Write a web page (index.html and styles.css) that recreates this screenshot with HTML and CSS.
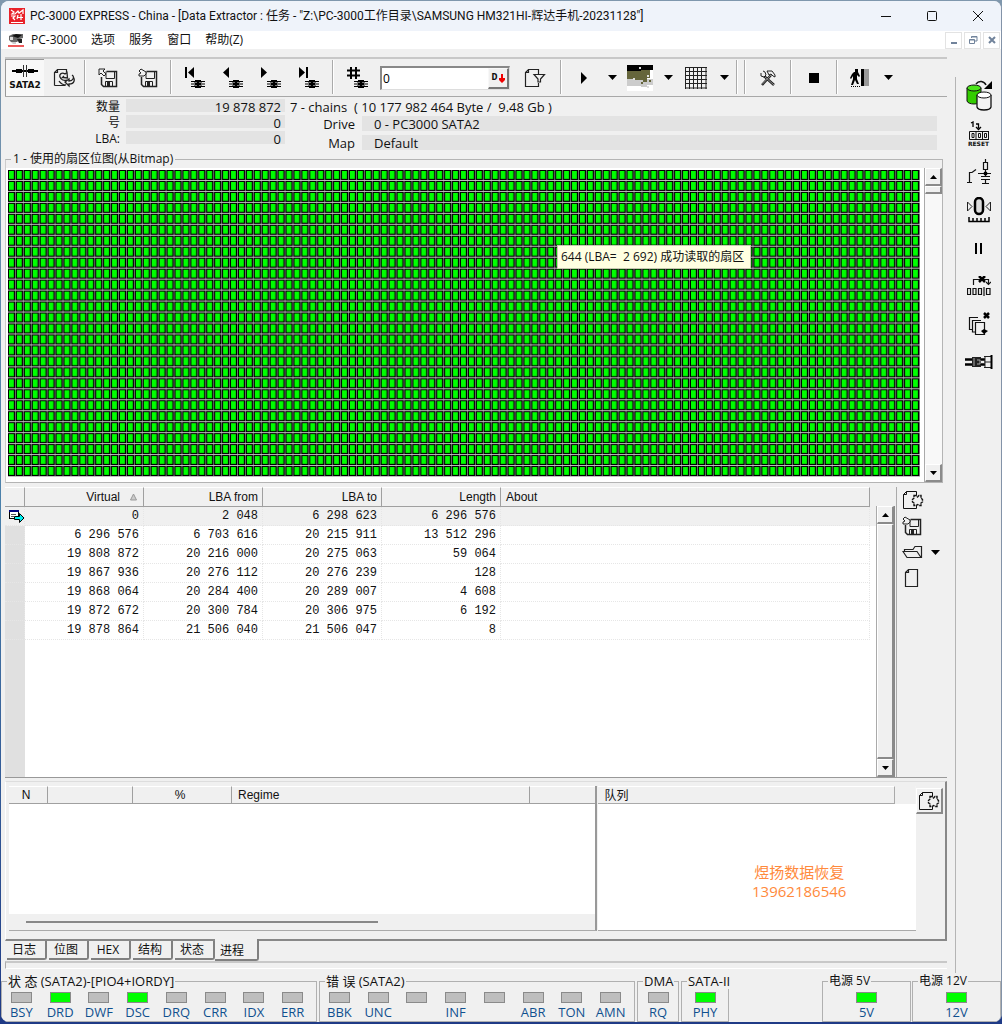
FILE: index.html
```html
<!DOCTYPE html>
<html lang="zh-CN">
<head>
<meta charset="utf-8">
<meta name="viewport" content="width=device-width, initial-scale=1">
<title>PC-3000 EXPRESS - China</title>
<link rel="stylesheet" href="styles.css">
</head>
<body>
<svg class="sprite" aria-hidden="true">
  <symbol id="i-gear-doc" viewBox="0 0 22 20">
    <path d="M4.500 1.500H14.500V5M1.500 4.500V18.500H14.500V15M1.500 4.500H4.500V1.500M1.500 4.500L4.500 1.500" fill="none" stroke="#111"/>
    <path d="M12 5.500H14L15.500 7L17 5.500H19V8L20.500 9.500V12L19 13V15.500H17L15.500 14.500L14 15.500H12V13L10.500 12V9.500L12 8Z" fill="#f0f0f0" stroke="#111" stroke-width="1.400" stroke-dasharray="3 .7"/>
  </symbol>
  <symbol id="i-save" viewBox="0 0 20 20">
    <path d="M8.500 3.500H18.500V18.500H5.500L3.500 16.500V9" fill="none" stroke="#222" stroke-width="1.500"/>
    <path d="M8 3.500V10.500H16.500V4M7.500 18V13.500H14.500V18M9.500 14V18" fill="none" stroke="#222"/>
    <rect x="9" y="14" width="3" height="4" fill="#222"/>
  </symbol>
  <symbol id="i-caret" viewBox="0 0 9 5"><path d="M0 0H9L4.500 5Z"/></symbol>
  <symbol id="i-chip" viewBox="0 0 14 8">
    <path d="M0 1.500H14M0 4H14M0 6.500H14" stroke="#000"/><rect x="4" y="0" width="6" height="8"/><path d="M3 2.500H6M8 2.500H11M3 5.500H6M8 5.500H11" stroke="#777"/>
  </symbol>
  <symbol id="i-up" viewBox="0 0 7 4"><path d="M0 4H7L3.500 0Z"/></symbol>
  <symbol id="i-down" viewBox="0 0 7 4"><path d="M0 0H7L3.500 4Z"/></symbol>
</svg>

<div class="window">
  <header class="titlebar">
    <svg class="app-icon" viewBox="0 0 16 16" aria-hidden="true"><rect width="16" height="16" fill="#e8222a"/><path d="M2 2L5 4L3 6H6L9 3L10 5L14 2V6M2 8H6L4 10L6 12M9 7L8 11M12 6V12M9 9.500H14M2 14.500H14" fill="none" stroke="#fff" stroke-width="1.200"/></svg>
    <h1 class="title">PC-3000 EXPRESS - China - [Data Extractor : 任务 - "Z:\PC-3000工作目录\SAMSUNG HM321HI-辉达手机-20231128"]</h1>
    <div class="win-controls">
      <button type="button" aria-label="最小化"><svg width="12" height="12" viewBox="0 0 12 12"><path d="M1 6.500H11" stroke="#111"/></svg></button>
      <button type="button" aria-label="最大化"><svg width="12" height="12" viewBox="0 0 12 12"><rect x="1.500" y="1.500" width="9" height="9" rx="1" fill="none" stroke="#111"/></svg></button>
      <button type="button" aria-label="关闭"><svg width="12" height="12" viewBox="0 0 12 12"><path d="M1 1L11 11M11 1L1 11" stroke="#111"/></svg></button>
    </div>
  </header>

  <nav class="menubar">
    <svg class="menu-icon" viewBox="0 0 16 14" aria-hidden="true"><path d="M1 3L5 1H15V5L12 6L9 9H3L1 7Z" fill="#666"/><path d="M4 3L8 1L14 2L10 5Z" fill="#111"/><path d="M2 4H5V7H2Z" fill="#ddd"/><path d="M9 6H14V10H11Z" fill="#222"/><path d="M3 9H8V11H5Z" fill="#ccc"/><rect y="12" width="16" height="2" fill="#ee5b5b"/></svg>
    <button type="button">PC-3000</button>
    <button type="button">选项</button>
    <button type="button">服务</button>
    <button type="button">窗口</button>
    <button type="button">帮助(Z)</button>
    <div class="mdi-controls">
      <button type="button" aria-label="最小化子窗口"><svg width="10" height="10" viewBox="0 0 10 10"><path d="M2 8H8" stroke="#71839b" stroke-width="2"/></svg></button>
      <button type="button" aria-label="还原子窗口"><svg width="10" height="10" viewBox="0 0 10 10"><path d="M3.500 3V1.500H9V6H7M3.500 2H9M1.500 4.500H6.500V8.500H1.500ZM1.500 5H6.500" fill="none" stroke="#71839b"/></svg></button>
      <button type="button" aria-label="关闭子窗口"><svg width="10" height="10" viewBox="0 0 10 10"><path d="M2 2L8 8M8 2L2 8" stroke="#71839b" stroke-width="2"/></svg></button>
    </div>
  </nav>

  <div class="workspace">
    <main class="main">
      <div class="toolbar">
        <button type="button" class="tool sata"><svg width="26" height="12" viewBox="0 0 26 12" aria-hidden="true"><path d="M0 6H26" stroke="#000" stroke-width="2"/><path d="M4 4.500H10M16 4.500H22M4 7.500H10M16 7.500H22" stroke="#000"/><path d="M11.500 0V12M14.500 0V12" stroke="#333"/></svg><span>SATA2</span></button>
        <button type="button" class="tool refresh" aria-label="刷新"><svg width="22" height="20" viewBox="0 0 22 20"><path d="M1.500 17.500V4.500L4.500 1.500H13.500V4M1.500 4.500H4.500V1.500M1.500 17.500H12" fill="none" stroke="#222" stroke-width="1.200"/><path d="M7 9C6 6 9 4 12 6L14 4.500L14.500 10L9.500 9.500L11 8M19 7C22 9 20 13 16 13V11L12 14L16 18V16C22 16 22 11 20 9M7 9C8 12 11 13 14 12M6 13C8 16 10 17 13 17" fill="none" stroke="#222" stroke-width="1.300"/></svg></button>
        <span class="sep"></span>
        <div class="group saves">
          <button type="button" class="tool" aria-label="保存"><svg width="20" height="20" viewBox="0 0 20 20"><use href="#i-save"/><path d="M1 1H7L5 3L8 6L6 8L3 5L1 7Z" fill="#f0f0f0" stroke="#222"/></svg></button>
          <button type="button" class="tool" aria-label="另存为"><svg width="20" height="20" viewBox="0 0 20 20"><use href="#i-save"/><path d="M3 1L8 4V6L6 8H1V6L3 5L1 3Z" fill="#f0f0f0" stroke="#222"/></svg></button>
        </div>
        <span class="sep"></span>
        <div class="group navs">
          <button type="button" class="tool" aria-label="首个"><svg width="22" height="22" viewBox="0 0 22 22"><path d="M2 0V11" stroke="#000" stroke-width="2"/><path d="M10 0V11L4 5.500Z"/><use href="#i-chip" x="7" y="13" width="14" height="8"/></svg></button>
          <button type="button" class="tool" aria-label="上一个"><svg width="22" height="22" viewBox="0 0 22 22"><path d="M7 0V11L1 5.500Z"/><use href="#i-chip" x="7" y="13" width="14" height="8"/></svg></button>
          <button type="button" class="tool" aria-label="下一个"><svg width="22" height="22" viewBox="0 0 22 22"><path d="M1 0V11L7 5.500Z"/><use href="#i-chip" x="7" y="13" width="14" height="8"/></svg></button>
          <button type="button" class="tool" aria-label="末个"><svg width="22" height="22" viewBox="0 0 22 22"><path d="M1 0V11L7 5.500Z"/><path d="M9 0V11" stroke="#000" stroke-width="2"/><use href="#i-chip" x="7" y="13" width="14" height="8"/></svg></button>
        </div>
        <span class="sep"></span>
        <button type="button" class="tool goto" aria-label="转到"><svg width="22" height="22" viewBox="0 0 22 22"><path d="M5 0V12M10 0V12M1 3.500H14M1 8.500H14" stroke="#000" stroke-width="2"/><use href="#i-chip" x="8" y="13" width="14" height="8"/></svg></button>
        <div class="lba-box">
          <input type="text" value="0" aria-label="LBA">
          <button type="button" aria-label="十进制">D<svg width="6" height="9" viewBox="0 0 6 9"><path d="M2 0H4V4H6V6L3 9L0 6V4H2Z" fill="#f00000"/></svg></button>
        </div>
        <button type="button" class="tool filter" aria-label="过滤"><svg width="22" height="20" viewBox="0 0 22 20"><path d="M14.500 6V1.500H4.500L1.500 4.500V18.500H14.500V15M1.500 4.500H4.500V1.500" fill="none" stroke="#222" stroke-width="1.200"/><path d="M10 6.500H20.500L16.500 11V14H14V11Z" fill="#f0f0f0" stroke="#222" stroke-width="1.200"/></svg></button>
        <span class="sep"></span>
        <button type="button" class="tool" aria-label="开始"><svg width="6" height="12" viewBox="0 0 6 12"><path d="M0 0V12L6 6Z"/></svg></button>
        <button type="button" class="drop" aria-label="开始选项"><svg width="9" height="5"><use href="#i-caret"/></svg></button>
        <button type="button" class="tool" aria-label="位图"><svg width="26" height="26" viewBox="0 0 26 26" shape-rendering="crispEdges"><rect width="26" height="26" fill="#fff"/><path d="M0 14H26V20H20V22H14V21H0Z" fill="#ccc"/><path d="M0 6H8V5H23V13H20V17H16V15H7V14H0Z" fill="#65653b"/><path d="M0 0H26V5H14V6H0Z"/><path d="M12 2H14V4H12ZM20 10H22V12H20ZM6 13H8V15H6ZM20 21H22V23H20Z" fill="#ddd"/><path d="M14 17H16V19H14ZM22 15H24V17H22Z" fill="#65653b"/></svg></button>
        <button type="button" class="drop" aria-label="位图选项"><svg width="9" height="5"><use href="#i-caret"/></svg></button>
        <button type="button" class="tool" aria-label="网格"><svg width="22" height="22" viewBox="0 0 22 22"><path d="M.500 0V22M4.500 0V22M8.500 0V22M12.500 0V22M16.500 0V22M21 0V22M0 .500H22M0 4.500H22M0 8.500H22M0 12.500H22M0 16.500H22M0 21H22" stroke="#222"/></svg></button>
        <button type="button" class="drop" aria-label="网格选项"><svg width="9" height="5"><use href="#i-caret"/></svg></button>
        <span class="sep after-drop"></span>
        <span class="sep after-drop"></span>
        <button type="button" class="tool" aria-label="工具"><svg width="16" height="16" viewBox="0 0 16 16"><path d="M2 15L11 5M4 6L14 15" stroke="#222" stroke-width="2.500"/><path d="M2 14.500L11 5M4.500 6.500L14 15" stroke="#aaa" stroke-width=".8"/><path d="M1 3V6L4 7L6 5L5 2L3 1M7 1H12L15 5V7L13 6L11 4L9 5Z" fill="#eee" stroke="#222"/></svg></button>
        <span class="sep"></span>
        <button type="button" class="tool" aria-label="停止"><svg width="10" height="10" viewBox="0 0 10 10"><rect width="10" height="10"/></svg></button>
        <span class="sep"></span>
        <button type="button" class="tool" aria-label="退出"><svg width="20" height="20" viewBox="0 0 20 20"><path d="M5 1H8V4H5ZM4 4H8L10 8L9 9L7 7L7 11L9 16H7L5 12L3 17H1L3 11L3 8L1 11L0 10L2 6Z"/><path d="M1 18.500H10" stroke="#000" stroke-dasharray="1 1"/><rect x="11" y="1" width="3" height="17"/><rect x="14" y="1" width="5" height="17" fill="#999"/></svg></button>
        <button type="button" class="drop" aria-label="退出选项"><svg width="9" height="5"><use href="#i-caret"/></svg></button>
      </div>

      <section class="info">
        <div class="counts">
          <label for="qty">数量</label><output id="qty">19 878 872</output>
          <label for="num">号</label><output id="num">0</output>
          <label for="lba">LBA:</label><output id="lba">0</output>
        </div>
        <div class="details">
          <p class="summary">7 - chains&nbsp; ( 10 177 982 464 Byte /&nbsp; 9.48 Gb )</p>
          <label for="drive">Drive</label><output id="drive">0 - PC3000 SATA2</output>
          <label for="map">Map</label><output id="map">Default</output>
        </div>
      </section>

      <fieldset class="bitmap">
        <legend>1 - 使用的扇区位图(从Bitmap)</legend>
        <div class="bitmap-body">
          <div class="sectors">
            <svg class="sector-grid" viewBox="0 0 920 308" preserveAspectRatio="none" role="img" aria-label="扇区位图">
              <defs><pattern id="cell" width="8" height="11" patternUnits="userSpaceOnUse"><rect width="8" height="11" fill="#c0c0c0"/><rect width="8" height="10" fill="#707070"/><rect width="7" height="10" fill="#000"/><rect x="1" y="1" width="5" height="8" fill="#00a800"/><rect x="1" y="1" width="4.600" height="7.600" fill="#00ff00"/></pattern></defs>
              <rect width="920" height="308" fill="url(#cell)"/>
            </svg>
            <div class="tooltip" role="tooltip">644 (LBA=&nbsp; 2 692) 成功读取的扇区</div>
          </div>
          <div class="scrollbar">
            <button type="button" class="raised" aria-label="向上"><svg width="7" height="4"><use href="#i-up"/></svg></button>
            <span class="thumb raised"></span>
            <button type="button" class="raised end" aria-label="向下"><svg width="7" height="4"><use href="#i-down"/></svg></button>
          </div>
        </div>
      </fieldset>

      <section class="chains">
        <div class="table-area">
          <table>
            <colgroup><col class="c-mark"><col class="c-num"><col class="c-num"><col class="c-num"><col class="c-num"><col></colgroup>
            <thead><tr><th></th><th>Virtual<svg class="sort" width="7" height="8" viewBox="0 0 7 8" aria-hidden="true"><path d="M3.500 1L.500 7H6.500Z" fill="#ccc" stroke="#999"/></svg></th><th>LBA from</th><th>LBA to</th><th>Length</th><th class="about">About</th></tr></thead>
            <tbody>
              <tr class="current"><td><svg width="16" height="13" viewBox="0 0 16 13" aria-hidden="true"><rect x=".500" y=".500" width="9" height="8" fill="#fff" stroke="#000"/><rect width="10" height="2" fill="#000080"/><path d="M2 4.500H7M2 6.500H5" stroke="#555"/><path d="M5.500 6.500H10.500V3.500L15 8L10.500 12.500V9.500H5.500Z" fill="#00f0f0" stroke="#000"/></svg></td><td>0</td><td>2 048</td><td>6 298 623</td><td>6 296 576</td><td></td></tr>
              <tr><td></td><td>6 296 576</td><td>6 703 616</td><td>20 215 911</td><td>13 512 296</td><td></td></tr>
              <tr><td></td><td>19 808 872</td><td>20 216 000</td><td>20 275 063</td><td>59 064</td><td></td></tr>
              <tr><td></td><td>19 867 936</td><td>20 276 112</td><td>20 276 239</td><td>128</td><td></td></tr>
              <tr><td></td><td>19 868 064</td><td>20 284 400</td><td>20 289 007</td><td>4 608</td><td></td></tr>
              <tr><td></td><td>19 872 672</td><td>20 300 784</td><td>20 306 975</td><td>6 192</td><td></td></tr>
              <tr><td></td><td>19 878 864</td><td>21 506 040</td><td>21 506 047</td><td>8</td><td></td></tr>
            </tbody>
          </table>
        </div>
        <div class="scrollbar chains-scroll">
          <button type="button" class="raised" aria-label="向上"><svg width="7" height="4"><use href="#i-up"/></svg></button>
          <span class="thumb full raised"></span>
          <button type="button" class="raised" aria-label="向下"><svg width="7" height="4"><use href="#i-down"/></svg></button>
        </div>
        <div class="chain-tools">
          <button type="button" aria-label="设置"><svg width="22" height="20"><use href="#i-gear-doc"/></svg></button>
          <button type="button" aria-label="保存链"><svg width="20" height="20" viewBox="0 0 20 20"><use href="#i-save"/><path d="M3 1L8 4V6L6 8H1V6L3 5L1 3Z" fill="#f0f0f0" stroke="#222"/></svg></button>
          <button type="button" aria-label="打开"><svg width="21" height="14" viewBox="0 0 21 14"><path d="M2.500 6V4.500H11L13 1.500H19.500V12.500H5L1 6.500H15L19 12.500" fill="none" stroke="#222" stroke-width="1.200"/></svg><svg class="open-caret" width="9" height="5"><use href="#i-caret"/></svg></button>
          <button type="button" aria-label="新建"><svg width="20" height="20" viewBox="0 0 20 20"><path d="M3.500 4.500L6.500 1.500H15.500V18.500H3.500ZM3.500 4.500H6.500V1.500" fill="none" stroke="#222" stroke-width="1.200"/></svg></button>
        </div>
      </section>

      <section class="process">
        <div class="tasks">
          <table>
            <colgroup><col class="t-n"><col class="t-blank"><col class="t-pct"><col class="t-regime"><col></colgroup>
            <thead><tr><th>N</th><th></th><th>%</th><th class="regime">Regime</th><th></th></tr></thead>
          </table>
          <div class="tasks-body"></div>
          <div class="hscroll"><span></span></div>
        </div>
        <div class="queue">
          <h2>队列</h2>
          <p class="watermark">煜扬数据恢复<br>13962186546</p>
        </div>
        <button type="button" class="queue-config raised" aria-label="队列设置"><svg width="22" height="20"><use href="#i-gear-doc"/></svg></button>
      </section>

      <div class="tabs" role="tablist">
        <button type="button" role="tab">日志</button>
        <button type="button" role="tab">位图</button>
        <button type="button" role="tab">HEX</button>
        <button type="button" role="tab">结构</button>
        <button type="button" role="tab">状态</button>
        <button type="button" role="tab" class="active" aria-selected="true">进程</button>
      </div>
      <div class="strip"></div>
    </main>

    <aside class="side">
      <button type="button" aria-label="复制磁盘"><svg width="28" height="32" viewBox="0 0 28 32"><path d="M2 8V21C3 25 15 25 16 21V8" fill="#33cc00" stroke="#111"/><ellipse cx="9" cy="8" rx="7" ry="3" fill="#4be61a" stroke="#111"/><path d="M12 15V27C13 31 25 31 26 27V15" fill="#f4f4f4" stroke="#111" stroke-width="1.300"/><ellipse cx="19" cy="15" rx="7" ry="3" fill="#fff" stroke="#111"/><path d="M11 4C14 0 19 1 21 5" fill="none" stroke="#111" stroke-width="1.500"/><path d="M27 1V9H19Z"/></svg></button>
      <button type="button" class="reset"><svg width="24" height="19" viewBox="0 0 24 19" aria-hidden="true"><path d="M4 2L6 1V6M9 3H11.500V7M9 6L11.500 8.500L14 6" fill="none" stroke="#000" stroke-width="1.300"/><path d="M22 10.500H2.500V18.500H22M9 10.500V18.500M15.500 10.500V18.500M21.500 10.500V18.500" fill="none" stroke="#111"/><path d="M5 12.500H7V16.500H5ZM11.500 12.500H13.500V16.500H11.500ZM17.500 12.500H19.500V16.500H17.500Z" fill="none" stroke="#111"/></svg><span>RESET</span></button>
      <button type="button" aria-label="电源"><svg width="24" height="26" viewBox="0 0 24 26"><path d="M0 23.500H5M2.500 23V13.500H5L9 10.500M18.500 0V3M18.500 10V17M16.500 3.500H20.500V10.500H16.500ZM11 14.500H24M14 17.500H23M14 20.500H23M18.500 20V24M15 24.500H22" fill="none" stroke="#111" stroke-width="1.200"/><circle cx="18.500" cy="14.500" r="2"/></svg></button>
      <button type="button" aria-label="归零"><svg width="26" height="26" viewBox="0 0 26 26"><rect x="9" y="1" width="8" height="16" rx="4" fill="#ddd" stroke="#000" stroke-width="2.500"/><path d="M1.500 5L6 9.500L1.500 14ZM24.500 5L20 9.500L24.500 14Z" fill="none" stroke="#222"/><path d="M3 20V24.500H23V20M7 21V24M11 21V24M15 21V24M19 21V24" fill="none" stroke="#000" stroke-width="1.500"/></svg></button>
      <button type="button" aria-label="暂停"><svg width="7" height="11" viewBox="0 0 7 11"><path d="M1 0V11M6 0V11" stroke="#000" stroke-width="2"/></svg></button>
      <button type="button" aria-label="跳过"><svg width="24" height="20" viewBox="0 0 24 20"><path d="M6.500 9V3.500H21.500V8M19 6L21.500 8.500L24 6M.500 12.500H3.500V18.500H.500ZM6 12.500H9V18.500H6ZM11.500 12.500H14.500V18.500H11.500ZM17 11V20M19.500 12.500H23V18.500H19.500Z" fill="none" stroke="#111" stroke-width="1.200"/><path d="M12 0L18 6M18 0L12 6" stroke="#000" stroke-width="2.500"/></svg></button>
      <button type="button" aria-label="清除副本"><svg width="22" height="24" viewBox="0 0 22 24"><path d="M4 17.500H1.500V5.500H10M7 20H4.500V8.500H13" fill="none" stroke="#111" stroke-width="1.200"/><path d="M7.500 10.500H16.500V22.500H7.500Z" fill="#f0f0f0" stroke="#111" stroke-width="1.200"/><path d="M16 1L21 6M21 1L16 6" stroke="#000" stroke-width="2.500"/><path d="M13 19L16 17L20 19L16 22Z"/></svg></button>
      <button type="button" aria-label="接口"><svg width="28" height="14" viewBox="0 0 28 14"><path d="M0 4.500H20M0 9.500H20" stroke="#000" stroke-width="2.500"/><path d="M7 2H16V12H7Z" fill="#222"/><path d="M9 3V11M12 5H15V9H12" fill="none" stroke="#aaa"/><path d="M19 1.500H26M19 7H26M19 12.500H26M20 2V12" stroke="#222"/><path d="M26.500 0V14" stroke="#000" stroke-width="2"/></svg></button>
    </aside>
  </div>

  <footer class="status">
    <fieldset class="wide"><legend>状 态 (SATA2)-[PIO4+IORDY]</legend>
      <ul><li><i class="led"></i>BSY</li><li><i class="led on"></i>DRD</li><li><i class="led"></i>DWF</li><li><i class="led on"></i>DSC</li><li><i class="led"></i>DRQ</li><li><i class="led"></i>CRR</li><li><i class="led"></i>IDX</li><li><i class="led"></i>ERR</li></ul>
    </fieldset>
    <fieldset class="wide"><legend>错 误 (SATA2)</legend>
      <ul><li><i class="led"></i>BBK</li><li><i class="led"></i>UNC</li><li><i class="led"></i></li><li><i class="led"></i>INF</li><li><i class="led"></i></li><li><i class="led"></i>ABR</li><li><i class="led"></i>TON</li><li><i class="led"></i>AMN</li></ul>
    </fieldset>
    <fieldset class="narrow"><legend>DMA</legend><ul><li><i class="led"></i>RQ</li></ul></fieldset>
    <fieldset class="narrow phy"><legend>SATA-II</legend><ul><li><i class="led on"></i>PHY</li></ul></fieldset>
    <fieldset class="power first"><legend>电源 5V</legend><ul><li><i class="led on"></i>5V</li></ul></fieldset>
    <fieldset class="power"><legend>电源 12V</legend><ul><li><i class="led on"></i>12V</li></ul></fieldset>
  </footer>
</div>
</body>
</html>
```

FILE: styles.css
```css
* { box-sizing: border-box; }

body {
  margin: 0;
  min-height: 100vh;
  padding: 1px 0 2px 1px;
  background: linear-gradient(to bottom, #7f97ad, #4a80aa 50%, #1f3a86);
  color: #111;
  font: 12px/16px "Open Sans", "Noto Sans CJK SC", sans-serif;
}

button {
  margin: 0;
  padding: 0;
  border: 0;
  background: none;
  color: inherit;
  font: inherit;
}

svg { display: block; flex: none; }
h1, h2, p, ul { margin: 0; padding: 0; font: inherit; }
fieldset { margin: 0; padding: 0; min-width: 0; border: 1px solid #b4b4b4; }
.sprite { display: none; }

.window {
  display: flex;
  flex-direction: column;
  min-height: calc(100vh - 3px);
  overflow: hidden;
  border-right: 1px solid #8393a8;
  border-radius: 8px;
  background: #f0f0f0;
}

/* title and menu */
.titlebar {
  display: flex;
  align-items: center;
  height: 30px;
  padding-left: 8px;
  background: #eff3fa;
}
.app-icon { width: 16px; height: 16px; margin-right: 5px; }
.title {
  flex: 1;
  min-width: 0;
  overflow: hidden;
  font-family: Roboto, "Noto Sans CJK SC", sans-serif;
  white-space: nowrap;
}
.win-controls { display: flex; align-self: stretch; }
.win-controls button { display: grid; place-items: center; width: 46px; }

.menubar {
  display: flex;
  align-items: center;
  gap: 14px;
  height: 18px;
  padding-left: 7px;
  background: #fff;
  line-height: 18px;
}
.menu-icon { width: 16px; height: 14px; margin-right: -7px; }
.mdi-controls { display: flex; gap: 2px; margin: 0 1px 0 auto; }
.mdi-controls button {
  display: grid;
  place-items: center;
  width: 17px;
  height: 17px;
  border: 1px solid #e3e3e3;
}

/* work area */
.workspace { display: flex; flex: 1; }
.main {
  display: flex;
  flex: 1;
  flex-direction: column;
  min-width: 0;
  padding: 8px 8px 4px 4px;
}

.toolbar {
  display: flex;
  height: 40px;
  border-top: 2px solid #c8c8c8;
  border-bottom: 1px solid #a8a8a8;
}
.tool { display: grid; place-items: center; flex: none; width: 44px; }
.sata {
  width: 39px;
  place-content: center;
  gap: 2px;
  border-top: 1px solid #999;
  border-left: 1px solid #999;
  background: #f8f8f8;
  font: bold 9px/12px "DejaVu Sans", sans-serif;
}
.refresh { width: 40px; }
.sep {
  flex: none;
  width: 2px;
  margin: 1px 0 2px;
  border-left: 1px solid #aaa;
  background: #fff;
}
.after-drop { margin-left: 6px; }
.group { display: flex; }
.saves { padding: 0 2px; }
.saves .tool { width: 40px; }
.navs { padding: 0 4px; }
.navs .tool { width: 38px; }
.lba-box {
  display: flex;
  width: 130px;
  height: 24px;
  margin: 7px 0 0;
  border: solid;
  border-width: 2px 1px 1px 2px;
  border-color: #888 #ddd #ddd #888;
  background: #fff;
}
.goto { width: 46px; }
.lba-box input {
  flex: 1;
  min-width: 0;
  padding: 0 1px;
  border: 0;
  background: none;
  font: inherit;
  outline: 0;
}
.lba-box button {
  display: flex;
  align-items: center;
  justify-content: center;
  gap: 1px;
  width: 21px;
  border: solid;
  border-width: 1px 2px 2px 1px;
  border-color: #f8f8f8 #777 #777 #f8f8f8;
  background: #f0f0f0;
  font: bold 10px/12px "Liberation Mono", monospace;
}
.filter { width: 50px; }
.drop { display: grid; place-items: center; flex: none; width: 12px; }

.info { display: flex; height: 55px; padding-top: 2px; font-size: 13px; }
.counts {
  display: grid;
  grid-template-columns: 115px 159px;
  grid-auto-rows: 13px;
  gap: 3px 6px;
  line-height: 16px;
}
.counts label { font-size: 12px; text-align: right; }
.counts output { background: #e3e3e3; padding-right: 4px; text-align: right; }
.details {
  display: grid;
  flex: 1;
  grid-template-columns: 65px 1fr;
  grid-template-rows: 13px 15px 15px;
  gap: 4px 7px;
  padding: 0 10px 0 5px;
}
.summary { grid-column: 1 / -1; }
.details label { text-align: right; }
.details output { padding-left: 12px; background: #e3e3e3; }

/* sector map */
.bitmap { margin-right: 4px; border-left-color: #ccc; }
.bitmap legend { margin-left: 5px; padding: 0 2px; line-height: 14px; }
.bitmap-body { display: flex; padding-top: 2px; }
.sectors {
  position: relative;
  flex: 1;
  min-width: 0;
  padding: 2px 4px 5px 2px;
  background: #fff;
}
.sector-grid { width: 100%; height: 307px; }
.tooltip {
  position: absolute;
  left: 551px;
  top: 77px;
  padding: 3px 6px 3px 3px;
  border: 1px solid #c8c8b0;
  background: #ffffe1;
  white-space: nowrap;
}

.raised {
  border: solid;
  border-width: 1px 2px 2px 1px;
  border-color: #fff #8a8a8a #8a8a8a #fff;
  background: #f0f0f0;
}
.scrollbar {
  display: flex;
  flex-direction: column;
  width: 18px;
  border-left: 1px solid #aaa;
  background: #f8f8f8;
}
.scrollbar button { display: grid; place-items: center; height: 18px; }
.thumb { height: 8px; }
.thumb.full { flex: 1; }
.scrollbar .end { margin-top: auto; }

/* chain table */
table { width: 100%; border-collapse: separate; border-spacing: 0; table-layout: fixed; }
th {
  height: 20px;
  padding: 0 4px 0 0;
  border: solid;
  border-width: 1px 1px 1px 0;
  border-color: #fff #a0a0a0 #a0a0a0;
  font: 12px/18px "Liberation Sans", "Noto Sans CJK SC", sans-serif;
  text-align: right;
}
.chains {
  display: flex;
  flex: 1;
  min-height: 291px;
  margin-top: 4px;
  border-bottom: 1px solid #999;
}
.table-area {
  flex: 1;
  min-width: 0;
  padding-right: 6px;
  background:
    linear-gradient(#f0f0f0, #f0f0f0) top / 100% 39px no-repeat,
    linear-gradient(to right, #e0e0e0 20px, #fff 20px);
}
.c-mark { width: 20px; }
.c-num { width: 119px; }
.sort { display: inline-block; margin: 0 2px 0 10px; }
.about { padding-left: 5px; text-align: left; }
td {
  height: 19px;
  padding: 0 4px 0 0;
  border: dotted #e6e6e6;
  border-width: 0 1px 1px 0;
  font: 12px/18px "Liberation Mono", monospace;
  text-align: right;
}
td:first-child { padding: 0 0 0 4px; }
.chains-scroll { margin-top: 19px; border-right: 1px solid #888; width: 19px; }
.chain-tools {
  display: flex;
  flex-direction: column;
  width: 51px;
  margin-left: 1px;
  padding-left: 5px;
  border-left: 1px solid #aaa;
}
.chain-tools button { display: flex; align-items: center; height: 26px; }
.open-caret { margin-left: 8px; }

/* process panel */
.process {
  display: flex;
  align-items: flex-start;
  height: 160px;
  margin-top: 3px;
  padding: 4px 2px 0 3px;
  border: solid;
  border-width: 1px 2px 2px 1px;
  border-color: #ddd #888 #888 #fff;
}
.tasks { flex: none; width: 63%; border-bottom: 1px solid #aaa; border-right: 2px solid #999; }
.process th { height: 18px; text-align: center; line-height: 14px; }
.process th.regime { padding-left: 6px; text-align: left; }
.t-n { width: 39px; }
.t-blank { width: 85px; }
.t-pct { width: 99px; }
.t-regime { width: 298px; }
.process th:last-child { border-right: 0; }
.tasks-body { height: 110px; background: #fff; }
.hscroll { height: 16px; padding: 7px 0 0 17px; }
.hscroll span { display: block; width: 352px; height: 2px; background: #888; }
.queue {
  flex: 1;
  min-width: 0;
  height: 145px;
  margin-left: 1px;
  border-bottom: 1px solid #aaa;
  background: linear-gradient(#f0f0f0, #f0f0f0) top / 100% 18px no-repeat #fff;
}
.queue h2 {
  height: 18px;
  margin-right: 21px;
  padding-left: 6px;
  border: solid;
  border-width: 1px 1px 1px 0;
  border-color: #fff #aaa #aaa;
  line-height: 17px;
}
.watermark {
  padding: 59px 0 0 84px;
  color: #ff8a3c;
  font-size: 15px;
  line-height: 19px;
  text-align: center;
}
.queue-config { display: grid; place-items: center; width: 27px; height: 26px; margin-top: 2px; }

.tabs { display: flex; gap: 2px; height: 20px; padding-left: 2px; }
.tabs button {
  width: 40px;
  height: 19px;
  padding-right: 4px;
  border: solid #808080;
  border-width: 0 2px 2px 0;
  border-radius: 0 0 3px 0;
  line-height: 17px;
}
.tabs .active {
  width: 44px;
  height: 22px;
  margin: -2px 0 0 -2px;
  padding-right: 8px;
  background: #f0f0f0;
  line-height: 24px;
}
.strip {
  height: 8px;
  border: solid;
  border-width: 2px 0 1px 1px;
  border-color: #c8c8c8 #fff #fff #aaa;
}

.side {
  display: flex;
  flex: none;
  flex-direction: column;
  width: 46px;
  margin-top: 28px;
  border-left: 1px solid #b4b4b4;
}
.side button { display: grid; place-items: center; height: 38px; }
.side .reset { place-content: center; font: bold 6px/8px "DejaVu Sans", sans-serif; }

/* status lights */
.status { display: flex; font-size: 13px; }
.status fieldset { height: 49px; border-color: #b0b0b0; }
.status legend { margin-left: 5px; padding: 0 1px; line-height: 16px; white-space: nowrap; }
.status .wide { flex: 0 1 316px; margin-right: 2px; padding-right: 4px; }
.status .narrow { flex: none; width: 42px; margin-right: 2px; }
.status .phy { width: 48px; }
.status .power { flex: none; width: 89px; margin-left: 1px; }
.status .first { margin-left: auto; }
.status .power legend { font-size: 12px; }
.status ul { display: flex; padding-top: 3px; list-style: none; color: #10508f; }
.status li { flex: 1; display: flex; flex-direction: column; align-items: center; gap: 1px; }
.led { width: 21px; height: 11px; border: 1px solid #8a8a8a; background: #bebebe; }
.led.on { background: #00ff00; }
```
